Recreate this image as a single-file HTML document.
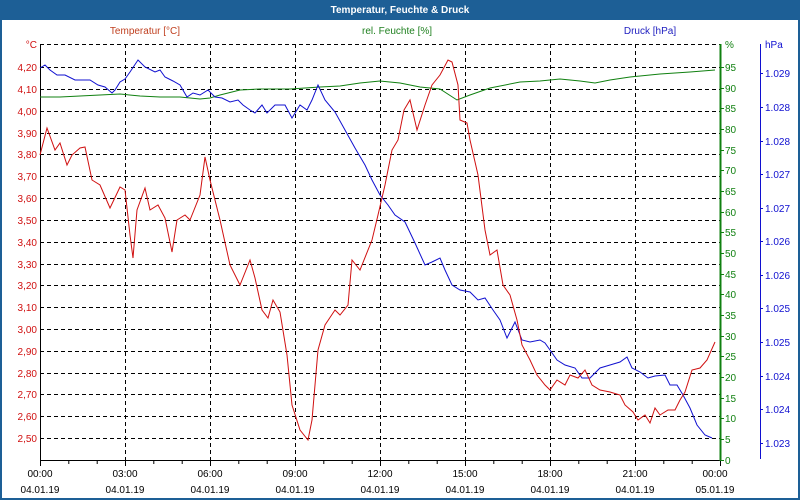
<!DOCTYPE html>
<html><head><meta charset="utf-8"><style>
html,body{margin:0;padding:0;width:800px;height:500px;overflow:hidden;background:#fff}
svg{display:block}
text{font-family:"Liberation Sans",sans-serif;font-size:10px}
</style></head><body>
<svg width="800" height="500" xmlns="http://www.w3.org/2000/svg">
<rect x="0" y="0" width="800" height="500" fill="#1d5f96"/>
<rect x="2" y="20" width="796" height="478" fill="#fff"/>
<text x="400" y="13" fill="#fff" font-weight="bold" text-anchor="middle" font-size="11">Temperatur, Feuchte &amp; Druck</text>
<text x="145" y="34" fill="#c04020" text-anchor="middle">Temperatur [°C]</text>
<text x="397" y="34" fill="#208020" text-anchor="middle">rel. Feuchte [%]</text>
<text x="650" y="34" fill="#2020c0" text-anchor="middle">Druck [hPa]</text>
<g stroke="#000" stroke-dasharray="4,3" stroke-width="1">
<line x1="40" y1="44.5" x2="720" y2="44.5"/>
<line x1="40" y1="67.5" x2="720" y2="67.5"/>
<line x1="40" y1="89.5" x2="720" y2="89.5"/>
<line x1="40" y1="111.5" x2="720" y2="111.5"/>
<line x1="40" y1="133.5" x2="720" y2="133.5"/>
<line x1="40" y1="154.5" x2="720" y2="154.5"/>
<line x1="40" y1="176.5" x2="720" y2="176.5"/>
<line x1="40" y1="198.5" x2="720" y2="198.5"/>
<line x1="40" y1="220.5" x2="720" y2="220.5"/>
<line x1="40" y1="242.5" x2="720" y2="242.5"/>
<line x1="40" y1="264.5" x2="720" y2="264.5"/>
<line x1="40" y1="285.5" x2="720" y2="285.5"/>
<line x1="40" y1="307.5" x2="720" y2="307.5"/>
<line x1="40" y1="329.5" x2="720" y2="329.5"/>
<line x1="40" y1="351.5" x2="720" y2="351.5"/>
<line x1="40" y1="373.5" x2="720" y2="373.5"/>
<line x1="40" y1="394.5" x2="720" y2="394.5"/>
<line x1="40" y1="416.5" x2="720" y2="416.5"/>
<line x1="40" y1="438.5" x2="720" y2="438.5"/>
<line x1="125.5" y1="44" x2="125.5" y2="460"/>
<line x1="210.5" y1="44" x2="210.5" y2="460"/>
<line x1="295.5" y1="44" x2="295.5" y2="460"/>
<line x1="380.5" y1="44" x2="380.5" y2="460"/>
<line x1="465.5" y1="44" x2="465.5" y2="460"/>
<line x1="550.5" y1="44" x2="550.5" y2="460"/>
<line x1="635.5" y1="44" x2="635.5" y2="460"/>
</g>
<line x1="40.5" y1="44" x2="40.5" y2="461" stroke="#000"/>
<line x1="40" y1="460.5" x2="721" y2="460.5" stroke="#000"/>
<g stroke="#000">
<path d="M40.5 460v6M68.8 460v4M97.2 460v4M125.5 460v6M153.8 460v4M182.2 460v4M210.5 460v6M238.8 460v4M267.2 460v4M295.5 460v6M323.8 460v4M352.2 460v4M380.5 460v6M408.8 460v4M437.2 460v4M465.5 460v6M493.8 460v4M522.2 460v4M550.5 460v6M578.8 460v4M607.2 460v4M635.5 460v6M663.8 460v4M692.2 460v4M720.5 460v6"/>
</g>
<line x1="720.5" y1="44" x2="720.5" y2="461" stroke="#108010" stroke-width="2"/>
<line x1="760.5" y1="44" x2="760.5" y2="459" stroke="#1010d0"/>
<g fill="#d01010" text-anchor="end">
<text x="37" y="48">°C</text><text x="37" y="71">4,20</text><text x="37" y="93">4,10</text><text x="37" y="115">4,00</text><text x="37" y="137">3,90</text><text x="37" y="158">3,80</text><text x="37" y="180">3,70</text><text x="37" y="202">3,60</text><text x="37" y="224">3,50</text><text x="37" y="246">3,40</text><text x="37" y="268">3,30</text><text x="37" y="289">3,20</text><text x="37" y="311">3,10</text><text x="37" y="333">3,00</text><text x="37" y="355">2,90</text><text x="37" y="377">2,80</text><text x="37" y="398">2,70</text><text x="37" y="420">2,60</text><text x="37" y="442">2,50</text>
</g>
<g fill="#108010">
<text x="725" y="48">%</text>
<text x="725" y="71">95</text><text x="725" y="92">90</text><text x="725" y="112">85</text><text x="725" y="133">80</text><text x="725" y="154">75</text><text x="725" y="174">70</text><text x="725" y="195">65</text><text x="725" y="216">60</text><text x="725" y="236">55</text><text x="725" y="257">50</text><text x="725" y="278">45</text><text x="725" y="298">40</text><text x="725" y="319">35</text><text x="725" y="340">30</text><text x="725" y="360">25</text><text x="725" y="381">20</text><text x="725" y="402">15</text><text x="725" y="422">10</text><text x="725" y="443">5</text><text x="725" y="464">0</text>
</g>
<path d="M721 67.5h3M721 88.5h3M721 108.5h3M721 129.5h3M721 150.5h3M721 170.5h3M721 191.5h3M721 212.5h3M721 232.5h3M721 253.5h3M721 274.5h3M721 294.5h3M721 315.5h3M721 336.5h3M721 356.5h3M721 377.5h3M721 398.5h3M721 418.5h3M721 439.5h3M721 460.5h3" stroke="#108010"/>
<g fill="#1010d0">
<text x="765" y="48">hPa</text><text x="765" y="77">1.029</text><text x="765" y="111">1.028</text><text x="765" y="145">1.028</text><text x="765" y="178">1.027</text><text x="765" y="212">1.027</text><text x="765" y="245">1.026</text><text x="765" y="279">1.026</text><text x="765" y="312">1.025</text><text x="765" y="346">1.025</text><text x="765" y="380">1.024</text><text x="765" y="413">1.024</text><text x="765" y="447">1.023</text>
</g>
<path d="M760 73.5h3M760 107.5h3M760 141.5h3M760 174.5h3M760 208.5h3M760 241.5h3M760 275.5h3M760 308.5h3M760 342.5h3M760 376.5h3M760 409.5h3M760 443.5h3" stroke="#1010d0"/>
<g fill="#000" text-anchor="middle">
<text x="40" y="477">00:00</text><text x="125" y="477">03:00</text><text x="210" y="477">06:00</text><text x="295" y="477">09:00</text><text x="380" y="477">12:00</text><text x="465" y="477">15:00</text><text x="550" y="477">18:00</text><text x="635" y="477">21:00</text><text x="715" y="477">00:00</text>
<text x="40" y="493">04.01.19</text><text x="125" y="493">04.01.19</text><text x="210" y="493">04.01.19</text><text x="295" y="493">04.01.19</text><text x="380" y="493">04.01.19</text><text x="465" y="493">04.01.19</text><text x="550" y="493">04.01.19</text><text x="635" y="493">04.01.19</text><text x="715" y="493">05.01.19</text>
</g>
<polyline fill="none" stroke="#108010" points="40,97 60,97 80,96 100,95 120,94 140,96 160,97 180,97 200,99 210,98 220,95 240,90 260,89 290,89 320,87 340,86 360,83 380,81 400,83 420,87 440,89 457,100 470,95 490,88 520,82 540,81 560,79 580,81 595,83 610,80 630,77 660,74 690,72 715,70"/>
<polyline fill="none" stroke="#1010d0" points="40,68 45,65 50,70 57,75 65,75 75,80 82,80 90,80 98,85 105,87 112,93 115,90 120,82 125,79 130,72 138,60 145,67 155,72 160,70 165,77 173,81 180,85 187,97 193,93 200,95 208,90 215,97 222,98 230,102 238,100 243,105 250,110 255,113 262,105 267,113 275,105 285,105 292,118 300,105 307,110 312,100 318,85 325,100 335,112 345,130 355,148 365,165 372,180 380,195 388,205 395,215 405,222 415,243 425,265 432,262 440,258 445,270 452,285 460,290 470,292 478,300 485,298 493,310 500,320 507,338 515,322 522,340 530,342 540,340 545,343 550,350 557,360 565,365 575,368 582,378 590,378 600,368 610,365 620,362 627,357 632,368 640,372 648,378 655,376 665,375 670,385 677,385 683,395 690,408 697,425 705,435 712,438"/>
<polyline fill="none" stroke="#d01010" points="40,155 47,128 55,150 60,143 67,165 72,155 80,148 85,147 92,180 100,185 110,208 120,187 125,190 130,235 133,258 137,210 145,188 150,210 158,205 165,218 172,252 177,220 185,215 190,220 200,195 205,157 210,180 220,220 230,265 240,285 250,260 255,278 262,310 268,318 273,300 280,312 287,355 292,405 300,430 308,440 312,420 318,350 325,325 335,310 340,315 348,305 352,260 360,270 372,240 378,215 385,185 392,150 398,140 404,110 410,100 417,130 425,105 432,85 440,75 448,60 452,62 458,85 460,120 467,123 470,140 478,175 485,230 490,255 497,250 503,285 510,295 517,320 522,345 530,360 537,375 545,385 550,390 557,380 565,385 570,375 578,378 585,370 592,385 600,390 610,392 620,395 625,405 633,412 638,420 645,415 650,423 655,408 660,415 668,410 675,410 680,400 685,392 692,370 700,368 707,360 715,342"/>
</svg>
</body></html>
